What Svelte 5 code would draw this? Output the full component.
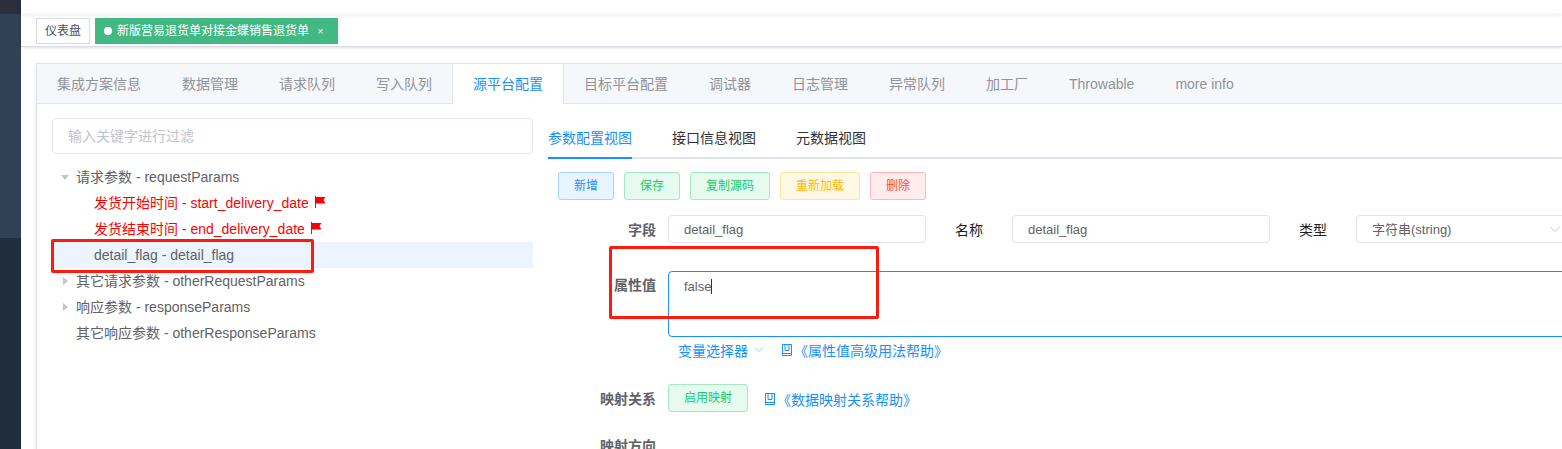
<script>
  const tabs = ['集成方案信息', '数据管理', '请求队列', '写入队列', '源平台配置', '目标平台配置', '调试器', '日志管理', '异常队列', '加工厂', 'Throwable', 'more info']
  const activeTab = '源平台配置'
  const views = ['参数配置视图', '接口信息视图', '元数据视图']
  const actions = [
    { label: '新增', kind: 'primary' },
    { label: '保存', kind: 'success' },
    { label: '复制源码', kind: 'success' },
    { label: '重新加载', kind: 'warning' },
    { label: '删除', kind: 'danger' },
  ]
  const tree = [
    { label: '请求参数 - requestParams', arrow: 'open' },
    { label: '发货开始时间 - start_delivery_date', child: true, required: true },
    { label: '发货结束时间 - end_delivery_date', child: true, required: true },
    { label: 'detail_flag - detail_flag', child: true, selected: true },
    { label: '其它请求参数 - otherRequestParams', arrow: 'closed' },
    { label: '响应参数 - responseParams', arrow: 'closed' },
    { label: '其它响应参数 - otherResponseParams' },
  ]
</script>

{#snippet book()}
  <svg class="book" width="12" height="13" viewBox="0 0 12 13" fill="none" stroke="currentColor" stroke-width="1">
    <path d="M1.500 .5h9v11h-9z" />
    <path d="M4 .5v6h4v-6" />
    <path d="M1.500 9.500h9" />
  </svg>
{/snippet}

<div class="app">
  <aside class="sidebar">
    <div class="logo"></div>
    <div class="menu"></div>
    <div class="menu-rest"></div>
  </aside>

  <div class="main">
    <div class="navbar"></div>
    <div class="tags">
      <span class="tag">仪表盘</span>
      <span class="tag active"><i class="dot"></i>新版营易退货单对接金蝶销售退货单<span class="close">×</span></span>
    </div>

    <div class="content">
      <div class="card">
        <div class="tabs">
          {#each tabs as tab}
            <div class="tab" class:active={tab === activeTab}>{tab}</div>
          {/each}
        </div>

        <div class="body">
          <div class="left">
            <div class="filter">输入关键字进行过滤</div>
            <div class="tree">
              {#each tree as node}
                <div class="node" class:child={node.child} class:selected={node.selected} class:required={node.required}>
                  {#if node.arrow}<i class="arrow {node.arrow}"></i>{/if}
                  <span>{node.label}</span>
                  {#if node.required}
                    <svg class="flag" width="12" height="12" viewBox="0 0 12 12">
                      <path d="M1 0h1v12H1z" fill="#f00" />
                      <path d="M2 1h9.500L9.500 4l2 3.500H2z" fill="#f00" />
                    </svg>
                  {/if}
                </div>
              {/each}
            </div>
          </div>

          <div class="right">
            <div class="views">
              {#each views as view, i}
                <div class="view" class:active={i === 0}>{view}</div>
              {/each}
            </div>

            <div class="actions">
              {#each actions as action}
                <span class="btn {action.kind}">{action.label}</span>
              {/each}
            </div>

            <div class="row first">
              <span class="lbl">字段</span>
              <div class="input w258">detail_flag</div>
              <span class="lbl plain name">名称</span>
              <div class="input w258">detail_flag</div>
              <span class="lbl plain type">类型</span>
              <div class="input select">字符串(string)
                <svg class="chev" width="12" height="8" viewBox="0 0 12 8" fill="none" stroke="#c0c4cc"><path d="M1 1.500l5 5 5-5" /></svg>
              </div>
            </div>

            <div class="row value">
              <span class="lbl">属性值</span>
              <div class="textarea">false<i class="caret"></i></div>
            </div>

            <div class="helpers">
              <span class="link">变量选择器
                <svg class="down" width="10" height="6" viewBox="0 0 10 6" fill="none" stroke="#8cc5ff"><path d="M1 .5l4 4 4-4" /></svg>
              </span>
              <span class="link help">{@render book()}《属性值高级用法帮助》</span>
            </div>

            <div class="row mapping">
              <span class="lbl">映射关系</span>
              <span class="btn success wide">启用映射</span>
              <span class="link help second">{@render book()}《数据映射关系帮助》</span>
            </div>

            <div class="row direction">
              <span class="lbl">映射方向</span>
            </div>
          </div>
        </div>
      </div>
    </div>
  </div>

  <div class="mark mark-tree"></div>
  <div class="mark mark-value"></div>
</div>

<style>
  :global(body) {
    margin: 0;
    background: #fff;
    overflow: hidden;
  }

  .app {
    position: relative;
    display: flex;
    width: 1562px;
    height: 449px;
    overflow: hidden;
    font-family: "Liberation Sans", "Noto Sans CJK SC", sans-serif;
    font-size: 14px;
    color: #606266;
  }

  .sidebar {
    width: 21px;
    flex: none;
    display: flex;
    flex-direction: column;
  }

  .logo {
    height: 14px;
    background: #2b2f3a;
  }

  .menu {
    height: 224px;
    background: #304156;
  }

  .menu-rest {
    flex: 1;
    background: #1f2d3d;
  }

  .main {
    flex: 1;
    min-width: 0;
  }

  .navbar {
    height: 14px;
    box-shadow: 0 1px 4px rgba(0, 21, 41, 0.08);
  }

  .tags {
    height: 33px;
    box-sizing: border-box;
    padding: 4px 0 0 15px;
    display: flex;
    gap: 5px;
    align-items: flex-start;
    border-bottom: 1px solid #d8dce5;
    box-shadow: 0 1px 3px rgba(0, 0, 0, 0.12);
  }

  .tag {
    height: 26px;
    box-sizing: border-box;
    border: 1px solid #d8dce5;
    padding: 0 8px;
    font-size: 12px;
    line-height: 24px;
    color: #495060;
    white-space: nowrap;
  }

  .tag.active {
    display: flex;
    align-items: center;
    background: #42b983;
    border-color: #42b983;
    color: #fff;
  }

  .dot {
    width: 8px;
    height: 8px;
    border-radius: 50%;
    background: #fff;
    margin-right: 5px;
  }

  .close {
    margin-left: 3px;
    font-size: 11px;
    width: 17px;
    text-align: center;
    opacity: 0.85;
  }

  .content {
    padding: 16px 0 0 15px;
  }

  .card {
    width: 1700px;
    height: 500px;
    box-sizing: border-box;
    border: 1px solid #dfe4ed;
    box-shadow: 0 2px 4px rgba(0, 0, 0, 0.12);
  }

  .tabs {
    display: flex;
    height: 39px;
    background: #f5f7fa;
    border-bottom: 1px solid #dfe4ed;
  }

  .tab {
    padding: 0 20px;
    margin-right: 1px;
    line-height: 41px;
    color: #909399;
    white-space: nowrap;
  }

  .tab.active {
    height: 40px;
    margin: 0 0 0 -1px;
    background: #fff;
    color: #1890ff;
    border-left: 1px solid #dfe4ed;
    border-right: 1px solid #dfe4ed;
  }

  .body {
    display: flex;
    gap: 15px;
    padding: 14px 15px;
  }

  .left {
    width: 481px;
    flex: none;
  }

  .filter {
    height: 36px;
    box-sizing: border-box;
    border: 1px solid #dfe4ed;
    border-radius: 4px;
    padding: 0 15px;
    line-height: 34px;
    color: #c0c4cc;
  }

  .tree {
    margin-top: 10px;
  }

  .node {
    position: relative;
    height: 26px;
    line-height: 26px;
    padding-left: 24px;
    white-space: nowrap;
    display: flex;
    align-items: center;
  }

  .node.child {
    padding-left: 42px;
  }

  .node.selected {
    background: #ecf5ff;
  }

  .node.required {
    color: #f00;
  }

  .flag {
    margin-left: 5px;
    margin-top: -2px;
  }

  .arrow {
    position: absolute;
    width: 0;
    height: 0;
  }

  .arrow.open {
    left: 9px;
    top: 11px;
    border-left: 4px solid transparent;
    border-right: 4px solid transparent;
    border-top: 5px solid #c0c4cc;
  }

  .arrow.closed {
    left: 11px;
    top: 9px;
    border-top: 4px solid transparent;
    border-bottom: 4px solid transparent;
    border-left: 5px solid #c0c4cc;
  }

  .right {
    flex: 1;
    min-width: 0;
  }

  .views {
    display: flex;
    height: 39px;
    border-bottom: 2px solid #dfe4ed;
  }

  .view {
    position: relative;
    margin-right: 40px;
    color: #303133;
    line-height: 40px;
    height: 41px;
  }

  .view.active {
    color: #1890ff;
    border-bottom: 2px solid #1890ff;
    height: 39px;
  }

  .actions {
    display: flex;
    gap: 10px;
    padding: 13px 0 0 10px;
  }

  .btn {
    height: 28px;
    box-sizing: border-box;
    padding: 0 15px;
    border: 1px solid;
    border-radius: 3px;
    font-size: 12px;
    line-height: 26px;
  }

  .btn.primary {
    color: #1890ff;
    background: #e8f4ff;
    border-color: #a3d3ff;
  }

  .btn.success {
    color: #13ce66;
    background: #e7faf0;
    border-color: #a1ebc2;
  }

  .btn.warning {
    color: #ffba00;
    background: #fff8e6;
    border-color: #ffe399;
  }

  .btn.danger {
    color: #ff4949;
    background: #ffeded;
    border-color: #ffb6b6;
  }

  .btn.wide {
    width: 80px;
    padding: 0;
    text-align: center;
  }

  .row {
    display: flex;
    align-items: center;
  }

  .row.first {
    margin-top: 15px;
  }

  .lbl {
    width: 108px;
    flex: none;
    margin-right: 12px;
    text-align: right;
    font-weight: 700;
    color: #606266;
  }

  .lbl.plain {
    font-weight: 400;
    color: #222;
  }

  .lbl.name {
    width: 57px;
    margin-right: 29px;
  }

  .lbl.type {
    width: 57px;
    margin-right: 29px;
  }

  .input {
    height: 28px;
    box-sizing: border-box;
    border: 1px solid #dfe4ed;
    border-radius: 4px;
    padding: 0 15px;
    font-size: 13px;
    line-height: 28px;
    white-space: nowrap;
  }

  .w258 {
    width: 258px;
    flex: none;
  }

  .select {
    position: relative;
    width: 240px;
    flex: none;
  }

  .chev {
    position: absolute;
    left: 192px;
    top: 9px;
  }

  .row.value {
    align-items: flex-start;
    margin-top: 28px;
  }

  .row.value .lbl {
    line-height: 28px;
  }

  .textarea {
    width: 960px;
    height: 66px;
    box-sizing: border-box;
    border: 1px solid #1890ff;
    border-radius: 4px;
    padding: 0 15px;
    font-size: 13px;
    line-height: 30px;
  }

  .caret {
    display: inline-block;
    width: 1px;
    height: 15px;
    background: #303133;
    vertical-align: -3px;
  }

  .helpers {
    display: flex;
    align-items: center;
    height: 28px;
    box-sizing: border-box;
    padding-bottom: 2px;
    margin: 0 0 0 130px;
    gap: 17px;
  }

  .link {
    color: #1890ff;
    white-space: nowrap;
    display: inline-flex;
    align-items: center;
  }

  .down {
    margin-left: 6px;
  }

  .book {
    margin-right: 1px;
  }

  .row.mapping {
    margin-top: 19px;
  }

  .second {
    margin: 2px 0 0 16px;
  }

  .row.direction {
    margin-top: 23px;
  }

  .mark {
    position: absolute;
    box-sizing: border-box;
    border: 3px solid #ff1a0d;
    border-radius: 2px;
  }

  .mark-tree {
    left: 51px;
    top: 239px;
    width: 263px;
    height: 34px;
  }

  .mark-value {
    left: 609px;
    top: 246px;
    width: 270px;
    height: 73px;
  }
</style>
